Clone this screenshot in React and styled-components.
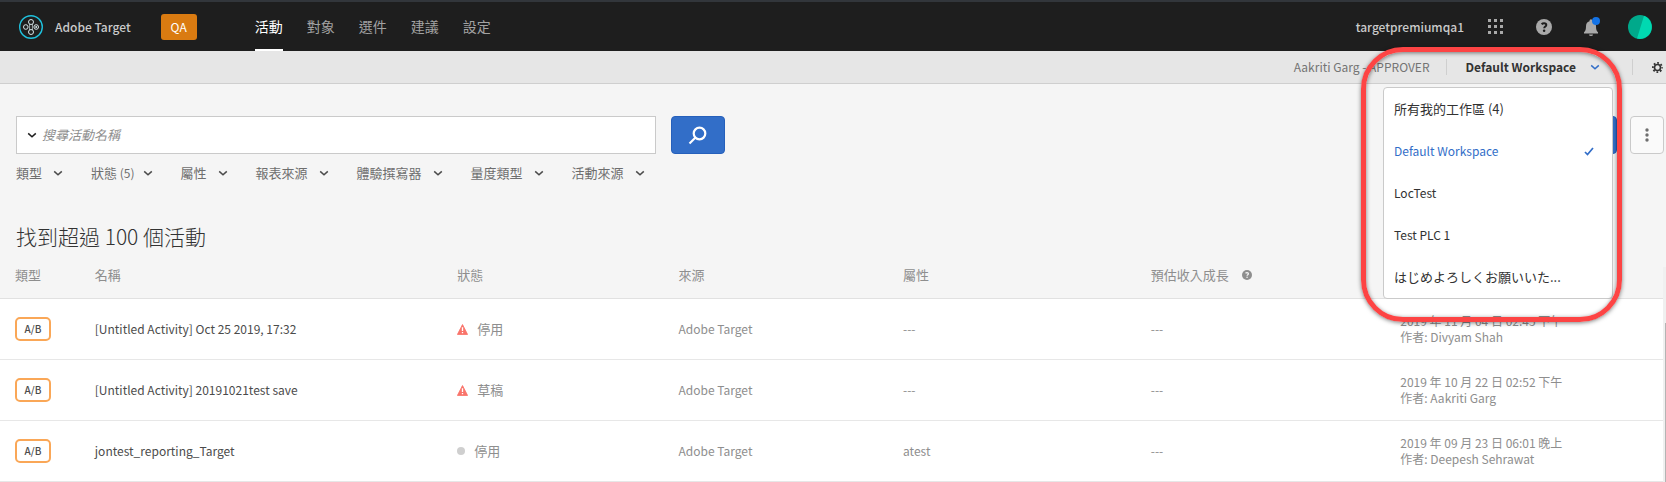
import React from 'react';
import styled, { createGlobalStyle } from 'styled-components';

const Global = createGlobalStyle`
  *, *::before, *::after { box-sizing: border-box; }
  body {
    margin: 0;
    background: #f5f5f5;
    color: #4b4b4b;
    font-family: "Noto Sans CJK TC", "Liberation Sans", sans-serif;
    font-size: 13px;
    line-height: 16px;
  }
  button, input { font: inherit; color: inherit; }
  button { cursor: pointer; padding: 0; border: 0; background: none; }
  a { color: inherit; text-decoration: none; }
`;

const Page = styled.div`
  position: relative;
  overflow: hidden;
`;

const TopBar = styled.header`
  display: flex;
  align-items: center;
  height: 51px;
  padding: 0 14px 0 19px;
  border-top: 2px solid #32363b;
  background: #1e1e1e;
  color: #cacaca;
`;

const Brand = styled.a`
  display: flex;
  align-items: center;
  gap: 12px;
  font-size: 12px;
  font-weight: 500;
`;

const EnvTag = styled.span`
  margin-left: 30px;
  padding: 5px 0;
  width: 36px;
  border-radius: 3px;
  background: #da7b11;
  color: #fff;
  font-size: 12px;
  text-align: center;
`;

const MainNav = styled.nav`
  display: flex;
  align-self: stretch;
  gap: 24px;
  margin-left: 58px;
  font-size: 14px;
`;

const NavLink = styled.a`
  display: flex;
  align-items: center;
  border-bottom: 2px solid ${(p) => (p.$active ? '#fff' : 'transparent')};
  color: ${(p) => (p.$active ? '#fff' : '#a2a2a2')};
`;

const Tools = styled.div`
  display: flex;
  align-items: center;
  gap: 24px;
  margin-left: auto;
  font-size: 12px;
  font-weight: 500;
`;

const ToolIcons = styled.div`
  display: flex;
  gap: 32px;
`;

const IconButton = styled.button`
  display: flex;
  align-items: center;
  justify-content: center;
`;

const AccountButton = styled(IconButton)`
  padding-left: 4px;
`;

const WorkspaceBar = styled.div`
  display: flex;
  align-items: center;
  justify-content: flex-end;
  height: 33px;
  padding-right: 3px;
  border-bottom: 1px solid #cfcfcf;
  background: #e6e6e6;
  color: #747474;
  font-size: 12px;
`;

const Divider = styled.span`
  width: 1px;
  height: 16px;
  background: #cfcfcf;
  margin: 0 19px 0 ${(p) => p.$before || '19px'};
`;

const WorkspaceSelect = styled.div`
  position: relative;
`;

const WorkspaceButton = styled.button`
  display: flex;
  align-items: center;
  gap: 14px;
  padding-right: 13px;
  color: #323232;
  font-weight: 700;
`;

const Menu = styled.ul`
  position: absolute;
  z-index: 2;
  top: 28px;
  right: 0;
  width: 230px;
  margin: 0;
  padding: 0;
  list-style: none;
  border: 1px solid #cacaca;
  border-radius: 4px;
  background: #fff;
`;

const MenuItem = styled.button`
  display: flex;
  align-items: center;
  justify-content: space-between;
  width: 100%;
  height: 42px;
  padding: 0 18px 0 10px;
  color: ${(p) => (p.$selected ? '#326ec8' : '#323232')};
  font-size: ${(p) => (p.$wide ? '13px' : '12px')};
`;

const Callout = styled.div`
  position: absolute;
  z-index: 3;
  top: 47px;
  right: 44px;
  width: 261px;
  height: 275px;
  border: 5px solid #fd4444;
  border-radius: 42px;
  box-shadow: 0 1px 4px rgba(0, 0, 0, 0.5), inset 0 1px 4px rgba(0, 0, 0, 0.5);
  pointer-events: none;
`;

const SearchRow = styled.div`
  display: flex;
  align-items: center;
  padding: 32px 2px 0 16px;
`;

const SearchField = styled.form`
  display: flex;
  gap: 15px;
  flex: 0 1 709px;
`;

const SearchBox = styled.label`
  display: flex;
  align-items: center;
  flex: 1;
  gap: 5px;
  height: 38px;
  padding-left: 10px;
  border: 1px solid #cacaca;
  background: #fff;
`;

const SearchInput = styled.input`
  flex: 1;
  min-width: 0;
  border: 0;
  padding: 0;
  outline: 0;
  background: none;
  font-style: italic;
  &::placeholder { color: #8e8e8e; opacity: 1; }
`;

const PrimaryButton = styled.button`
  display: flex;
  align-items: center;
  justify-content: center;
  width: ${(p) => p.$width};
  height: 38px;
  border: 1px solid #2660bb;
  border-radius: 4px;
  background: #326ec8;
  color: #fff;
`;

const Actions = styled.div`
  display: flex;
  gap: 13px;
  margin-left: auto;
`;

const MoreButton = styled.button`
  display: flex;
  align-items: center;
  justify-content: center;
  width: 34px;
  height: 38px;
  border: 1px solid #cacaca;
  border-radius: 4px;
  background: #fafafa;
`;

const Filters = styled.div`
  display: flex;
  gap: 28px;
  padding: 11px 16px 0;
`;

const FilterButton = styled.button`
  display: flex;
  align-items: center;
  gap: ${(p) => (p.$tight ? '8px' : '11px')};
  color: #6e6e6e;
`;

const Count = styled.span`
  font-size: 12px;
`;

const Heading = styled.h1`
  margin: 0;
  padding: 41px 16px 17px;
  color: #323232;
  font-size: 21px;
  font-weight: 300;
  line-height: 28px;
`;

const TableWrap = styled.div`
  position: relative;
  border-right: 3px solid #f0f0f0;
`;

const ScrollThumb = styled.span`
  position: absolute;
  top: 56px;
  right: -3px;
  bottom: 0;
  width: 1px;
  background: #b4b4b4;
`;

const Table = styled.table`
  width: 100%;
  border-collapse: collapse;
  table-layout: fixed;
  text-align: left;
`;

const HeadCell = styled.th`
  width: ${(p) => p.$width};
  padding: 0 0 15px 15px;
  border-bottom: 1px solid #e1e1e1;
  color: #8e8e8e;
  font-weight: 400;
`;

const Row = styled.tr`
  height: 61px;
  border-bottom: 1px solid #e7e7e7;
  background: #fff;
`;

const Cell = styled.td`
  padding: 0 0 0 15px;
  color: ${(p) => (p.$strong ? '#4b4b4b' : '#8e8e8e')};
  font-size: ${(p) => (p.$wide ? '13px' : '12px')};
`;

const TypeBadge = styled.span`
  display: block;
  width: 36px;
  padding: 2px 0;
  border: 2px solid #faa757;
  border-radius: 5px;
  font-size: 10px;
  line-height: 16px;
  font-weight: 500;
  text-align: center;
`;

const Inline = styled.span`
  display: flex;
  align-items: center;
  gap: ${(p) => p.$gap};
`;

const Dot = styled.span`
  width: 8px;
  height: 8px;
  border-radius: 50%;
  background: #cfcfcf;
`;

const Chevron = ({ color = '#4b4b4b' }) => (
  <svg width="10" height="6" viewBox="0 0 10 6" fill="none" stroke={color} strokeWidth="1.5" aria-hidden="true">
    <path d="M1.200 1.400L5 4.800l3.800-3.400" />
  </svg>
);

const TargetLogo = () => (
  <svg width="24" height="24" viewBox="0 0 24 24" fill="none" aria-hidden="true">
    <circle cx="12" cy="12" r="11.3" stroke="#1fc1dd" strokeWidth="1.4" />
    <g stroke="#d5e4e8" strokeWidth="1">
      <circle cx="12" cy="7" r="2.500" />
      <circle cx="12" cy="17" r="2.500" />
      <circle cx="6.800" cy="12" r="2.300" />
      <circle cx="17.200" cy="12" r="2.300" />
      <path d="M10.600 9v6M13.400 9v6" strokeWidth=".7" />
    </g>
    <circle cx="17.200" cy="12" r="1" fill="#d5e4e8" />
  </svg>
);

const AppsIcon = () => (
  <svg width="16" height="24" viewBox="0 0 16 24" fill="#a9a9a9" aria-hidden="true">
    {[4, 10, 16].map((y) => [0, 6, 12].map((x) => <rect key={`${x}-${y}`} x={x} y={y} width="3" height="3" />))}
  </svg>
);

const HelpIcon = ({ size, color, back }) => (
  <svg width={size} height={size} viewBox="0 0 16 16" aria-hidden="true">
    <circle cx="8" cy="8" r="8" fill={color} />
    <path d="M5.600 5.200C6.300 4.500 7.200 4.200 8.100 4.200c1.400 0 2.200.7 2.200 1.700 0 1.600-2.100 1.700-2.100 3.400" fill="none" stroke={back} strokeWidth="2" />
    <circle cx="8.100" cy="11.700" r="1.250" fill={back} />
  </svg>
);

const BellIcon = () => (
  <svg width="16" height="20" viewBox="0 0 16 20" aria-hidden="true">
    <path d="M5.500 4.200C5.500 3 6.200 2.300 7 2.300S8.500 3 8.500 4.200c2.400.6 3.500 2.600 3.500 5 0 3.300.5 4.500 2 6v1.300H0v-1.300c1.500-1.500 2-2.700 2-6 0-2.400 1.100-4.400 3.500-5z" fill="#a9a9a9" />
    <path d="M5 17.500h4a2 1.600 0 0 1-4 0z" fill="#a9a9a9" />
    <circle cx="12" cy="4" r="4" fill="#1473e6" />
  </svg>
);

const Avatar = () => (
  <svg width="24" height="24" viewBox="0 0 24 24" aria-hidden="true">
    <circle cx="12" cy="12" r="12" fill="#00a98b" />
    <path d="M16 .7A12 12 0 0 1 9 23.600z" fill="#00d9b1" />
  </svg>
);

const GearIcon = () => (
  <svg width="11" height="11" viewBox="0 0 11 11" fill="none" stroke="#323232" aria-hidden="true">
    <circle cx="5.500" cy="5.500" r="3" strokeWidth="1.600" />
    <circle cx="5.500" cy="5.500" r="4.600" strokeWidth="1.700" strokeDasharray="1.806 1.806" strokeDashoffset="0.900" />
  </svg>
);

const SearchIcon = () => (
  <svg width="20" height="20" viewBox="0 0 20 20" fill="none" stroke="#fff" strokeWidth="2.200" aria-hidden="true">
    <circle cx="11.500" cy="8.500" r="5.800" />
    <path d="M7.500 12.500l-6 6" />
  </svg>
);

const CheckIcon = () => (
  <svg width="10" height="9" viewBox="0 0 10 9" fill="none" stroke="#326ec8" strokeWidth="1.700" aria-hidden="true">
    <path d="M1 5l2.500 2.600L9 1" />
  </svg>
);

const MoreIcon = () => (
  <svg width="4" height="14" viewBox="0 0 4 14" fill="#6e6e6e" aria-hidden="true">
    <circle cx="2" cy="2" r="1.700" />
    <circle cx="2" cy="7" r="1.700" />
    <circle cx="2" cy="12" r="1.700" />
  </svg>
);

const AlertIcon = () => (
  <svg width="11" height="11" viewBox="0 0 10 10" aria-hidden="true">
    <path d="M5 .5l4.600 9H.4z" fill="#f9746b" stroke="#f9746b" strokeWidth=".8" strokeLinejoin="round" />
    <path d="M5 3v3.300M5 7.200v1.300" stroke="#fff" strokeWidth="1.200" />
  </svg>
);

const navItems = ['活動', '對象', '選件', '建議', '設定'];
const filters = [
  { label: '類型' },
  { label: '狀態', count: 5 },
  { label: '屬性' },
  { label: '報表來源' },
  { label: '體驗撰寫器' },
  { label: '量度類型' },
  { label: '活動來源' },
];
const workspaces = [
  { label: '所有我的工作區 (4)', wide: true },
  { label: 'Default Workspace', selected: true },
  { label: 'LocTest' },
  { label: 'Test PLC 1' },
  { label: 'はじめよろしくお願いいた...', wide: true },
];
const activities = [
  { name: '[Untitled Activity] Oct 25 2019, 17:32', alert: true, status: '停用', property: '---', date: '2019 年 11 月 04 日 02:45 下午', author: 'Divyam Shah' },
  { name: '[Untitled Activity] 20191021test save', alert: true, status: '草稿', property: '---', date: '2019 年 10 月 22 日 02:52 下午', author: 'Aakriti Garg' },
  { name: 'jontest_reporting_Target', alert: false, status: '停用', property: 'atest', date: '2019 年 09 月 23 日 06:01 晚上', author: 'Deepesh Sehrawat' },
];

export default function App() {
  return (
    <Page>
      <Global />
      <TopBar>
        <Brand href="#"><TargetLogo />Adobe Target</Brand>
        <EnvTag>QA</EnvTag>
        <MainNav>
          {navItems.map((n, i) => <NavLink key={n} href="#" $active={i === 0}>{n}</NavLink>)}
        </MainNav>
        <Tools>
          <span>targetpremiumqa1</span>
          <ToolIcons>
            <IconButton aria-label="Apps"><AppsIcon /></IconButton>
            <IconButton aria-label="Help"><HelpIcon size={16} color="#a9a9a9" back="#1e1e1e" /></IconButton>
            <IconButton aria-label="Notifications"><BellIcon /></IconButton>
          </ToolIcons>
          <AccountButton aria-label="Account"><Avatar /></AccountButton>
        </Tools>
      </TopBar>

      <WorkspaceBar>
        <span>Aakriti Garg - APPROVER</span>
        <Divider $before="16px" />
        <WorkspaceSelect>
          <WorkspaceButton aria-haspopup="true" aria-expanded="true">
            Default Workspace<Chevron color="#326ec8" />
          </WorkspaceButton>
          <Menu>
            {workspaces.map((w) => (
              <li key={w.label}>
                <MenuItem $selected={w.selected} $wide={w.wide}>
                  <span>{w.label}</span>{w.selected && <CheckIcon />}
                </MenuItem>
              </li>
            ))}
          </Menu>
        </WorkspaceSelect>
        <Divider />
        <IconButton aria-label="Settings"><GearIcon /></IconButton>
      </WorkspaceBar>

      <main>
        <SearchRow>
          <SearchField>
            <SearchBox>
              <Chevron color="#1e1e1e" />
              <SearchInput type="text" placeholder="搜尋活動名稱" aria-label="搜尋活動名稱" />
            </SearchBox>
            <PrimaryButton type="button" $width="54px" aria-label="Search"><SearchIcon /></PrimaryButton>
          </SearchField>
          <Actions>
            <PrimaryButton type="button" $width="120px" aria-label="Create" />
            <MoreButton aria-label="More"><MoreIcon /></MoreButton>
          </Actions>
        </SearchRow>

        <Filters>
          {filters.map((f) => (
            <FilterButton key={f.label} $tight={Boolean(f.count)}>
              <span>{f.label}{f.count && <Count> ({f.count})</Count>}</span>
              <Chevron />
            </FilterButton>
          ))}
        </Filters>

        <Heading>找到超過 100 個活動</Heading>

        <TableWrap>
          <Table>
            <thead>
              <tr>
                <HeadCell $width="4.8%">類型</HeadCell>
                <HeadCell $width="21.8%">名稱</HeadCell>
                <HeadCell $width="13.3%">狀態</HeadCell>
                <HeadCell $width="13.5%">來源</HeadCell>
                <HeadCell $width="14.9%">屬性</HeadCell>
                <HeadCell $width="15%">
                  <Inline $gap="13px">預估收入成長<HelpIcon size={10} color="#8e8e8e" back="#f5f5f5" /></Inline>
                </HeadCell>
                <HeadCell aria-label="Last updated" />
              </tr>
            </thead>
            <tbody>
              {activities.map((a) => (
                <Row key={a.name}>
                  <Cell $strong><TypeBadge>A/B</TypeBadge></Cell>
                  <Cell $strong>{a.name}</Cell>
                  <Cell $wide>
                    <Inline $gap="9px">{a.alert ? <AlertIcon /> : <Dot />}{a.status}</Inline>
                  </Cell>
                  <Cell>Adobe Target</Cell>
                  <Cell>{a.property}</Cell>
                  <Cell>---</Cell>
                  <Cell>{a.date}<br />作者: {a.author}</Cell>
                </Row>
              ))}
            </tbody>
          </Table>
          <ScrollThumb />
        </TableWrap>
      </main>
      <Callout />
    </Page>
  );
}
